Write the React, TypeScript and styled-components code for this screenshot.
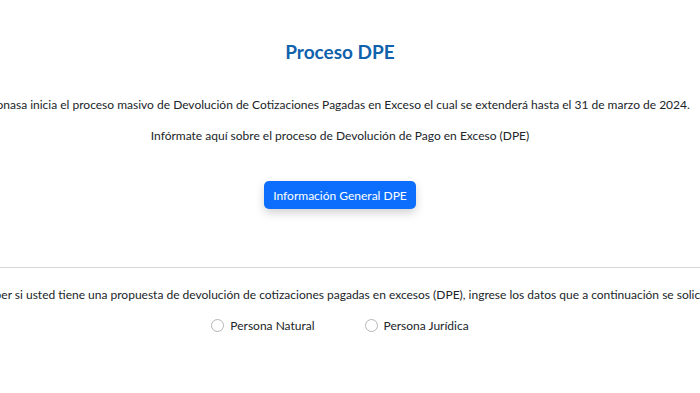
import React from "react";
import styled, { createGlobalStyle } from "styled-components";

const Global = createGlobalStyle`
  html, body { margin: 0; padding: 0; background: #fff; overflow: hidden; }
  body { font-family: Lato, "Open Sans", sans-serif; color: #212529; }
`;

const Page = styled.div`
  width: 680px;
  display: flex;
  flex-direction: column;
  align-items: center;
`;

const Section = styled.section<{ $top: number }>`
  width: 100%;
  display: flex;
  flex-direction: column;
  align-items: center;
  padding-top: ${(p) => p.$top}px;
`;

const Title = styled.h2`
  margin: 0 0 31px;
  font-size: 19px;
  font-weight: 700;
  color: #1062ad;
  line-height: 27px;
`;

const Text = styled.p<{ $gap?: number }>`
  margin: 0 0 ${(p) => p.$gap ?? 0}px;
  font-size: 12px;
  line-height: 18px;
  white-space: nowrap;
  color: #212529;
`;

const Button = styled.button`
  margin-top: 36px;
  height: 28px;
  padding: 0 9px;
  border: none;
  border-radius: 5px;
  background: #0d6efd;
  color: #fff;
  font-family: inherit;
  font-size: 12px;
  box-shadow: 0 4px 10px rgba(0, 0, 0, 0.18);
  cursor: pointer;
`;

const Divider = styled.hr`
  width: 700px;
  margin: 58px 0 0;
  border: none;
  border-top: 1px solid #d6d6d6;
  align-self: flex-start;
`;

const Radios = styled.div`
  display: flex;
  gap: 50px;
  margin-top: 14px;
`;

const RadioLabel = styled.label`
  display: flex;
  align-items: center;
  gap: 6px;
  font-size: 12px;
  color: #212529;
`;

const Circle = styled.span`
  width: 11px;
  height: 11px;
  border: 1px solid #b5b5b5;
  border-radius: 50%;
  display: inline-block;
`;

export default function App() {
  return (
    <>
      <Global />
      <Page>
        <Section $top={38}>
          <Title>Proceso DPE</Title>
          <Text $gap={13}>
            Fonasa inicia el proceso masivo de Devolución de Cotizaciones Pagadas en Exceso el cual se extenderá hasta el 31 de marzo de 2024.
          </Text>
          <Text>Infórmate aquí sobre el proceso de Devolución de Pago en Exceso (DPE)</Text>
          <Button>Información General DPE</Button>
        </Section>
        <Divider />
        <Section $top={18}>
          <Text>
            Para saber si usted tiene una propuesta de devolución de cotizaciones pagadas en excesos (DPE), ingrese los datos que a continuación se solicitan.
          </Text>
          <Radios>
            <RadioLabel>
              <Circle />
              Persona Natural
            </RadioLabel>
            <RadioLabel>
              <Circle />
              Persona Jurídica
            </RadioLabel>
          </Radios>
        </Section>
      </Page>
    </>
  );
}
